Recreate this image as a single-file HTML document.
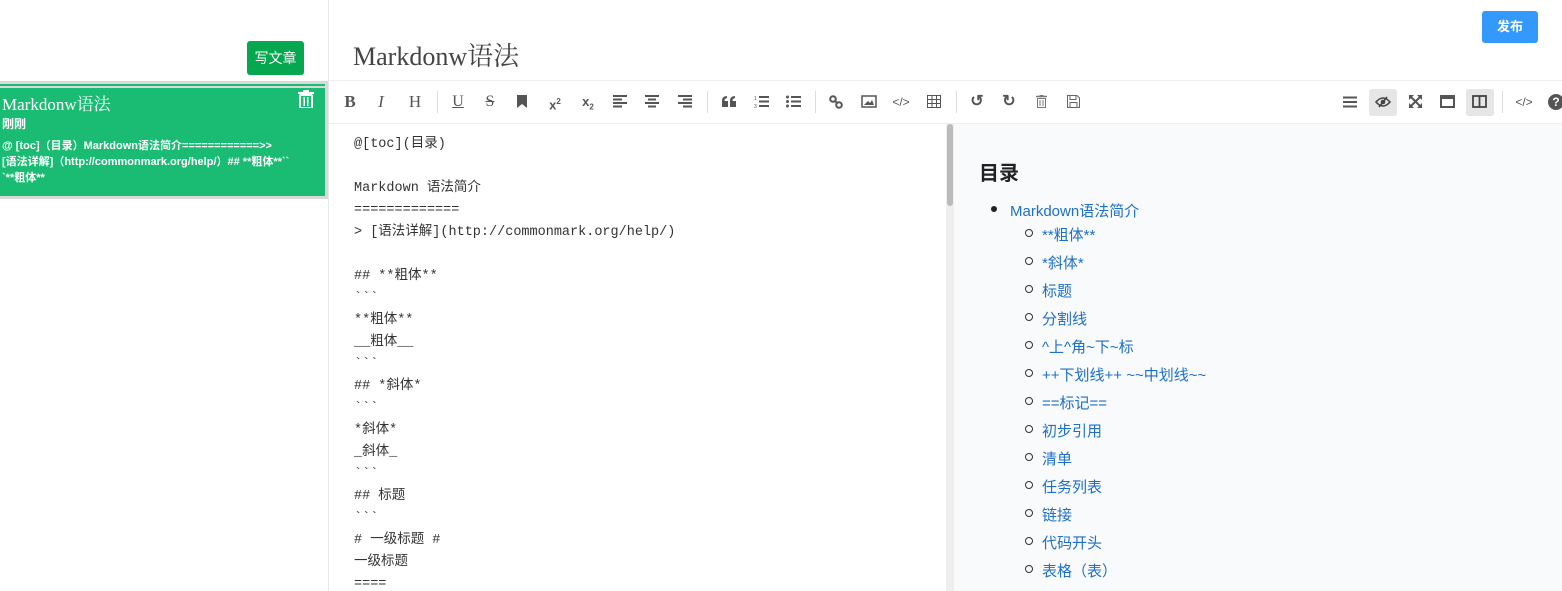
<!DOCTYPE html>
<html><head><meta charset="utf-8"><style>
*{margin:0;padding:0;box-sizing:border-box}
html{overflow:hidden;height:591px}
body{width:1562px;height:591px;overflow:hidden;background:#fff;font-family:"Liberation Sans","Noto Sans CJK SC",sans-serif;position:relative}
.a{position:absolute}
.ic{position:absolute;top:92px;width:20px;height:20px;text-align:center;line-height:20px;color:#555;font-size:15px}
.ed div{height:22px;line-height:22px;white-space:pre}
.toc div{position:absolute;color:#1d6fc7;font-size:15px}
.toc .c{width:8px;height:8px;border:1.5px solid #333;border-radius:50%;position:absolute}
</style></head><body>
<div class="a" style="left:328px;top:0;width:1px;height:591px;background:#e8e8e8"></div>
<div class="a" style="left:247px;top:41px;width:57px;height:34px;background:#05a84e;border-radius:3px;color:#fff;font-size:14px;line-height:34px;text-align:center">写文章</div>
<div class="a" style="left:0;top:81px;width:328px;height:118px;background:#d9d9d9"></div>
<div class="a" style="left:0;top:84px;width:325px;height:2px;background:#1abc74"></div>
<div class="a" style="left:0;top:88px;width:325px;height:108px;background:#1abc74;color:#fff">
<div class="a" style="left:2px;top:2px;font-family:'Liberation Serif','Noto Serif CJK SC',serif;font-size:17px">Markdonw语法</div>
<svg class="a" style="left:298px;top:2px" width="16" height="18" viewBox="0 0 16 18"><rect x="0" y="2" width="16" height="2" fill="#fff"/><rect x="5" y="0" width="6" height="2" fill="#fff"/><rect x="2" y="5" width="12" height="13" rx="1" fill="none" stroke="#fff" stroke-width="2"/><rect x="5.5" y="7" width="1.5" height="9" fill="#fff"/><rect x="9" y="7" width="1.5" height="9" fill="#fff"/></svg>
<div class="a" style="left:2px;top:27px;font-size:12px;font-weight:bold">刚刚</div>
<div class="a" style="left:2px;top:50px;width:300px;font-size:11px;font-weight:bold;line-height:16px">@ [toc]（目录）Markdown语法简介============&gt;&gt;<br>[语法详解]（http://commonmark.org/help/）## **粗体**&#96;&#96;<br>&#96;**粗体**</div>
</div>
<div class="a" style="left:353px;top:36px;font-family:'Liberation Serif','Noto Serif CJK SC',serif;font-size:26px;color:#444">Markdonw语法</div>
<div class="a" style="left:1482px;top:11px;width:56px;height:32px;background:#3399ff;border-radius:3px;color:#fff;font-size:13px;font-weight:bold;line-height:32px;text-align:center">发布</div>
<div class="a" style="left:329px;top:80px;width:1233px;height:1px;background:#eee"></div>
<div class="a" style="left:329px;top:123px;width:1233px;height:1px;background:#eee"></div>
<div class="ic" style="left:340px;font-family:'Liberation Serif',serif;font-weight:bold;font-size:17px">B</div>
<div class="ic" style="left:371px;font-family:'Liberation Serif',serif;font-style:italic;font-size:17px">I</div>
<div class="ic" style="left:405px;font-family:'Liberation Serif',serif;font-size:17px">H</div>
<div class="a" style="left:437px;top:91px;width:1px;height:22px;background:#ddd"></div>
<div class="ic" style="left:448px;text-decoration:underline;font-family:'Liberation Serif',serif;font-size:16px">U</div>
<div class="ic" style="left:480px;text-decoration:line-through;font-family:'Liberation Serif',serif;font-size:16px">S</div>
<svg class="a" style="left:517px;top:95px" width="10" height="13"><path d="M0 0H10V13L5 9L0 13Z" fill="#555"/></svg>
<div class="ic" style="left:545px;font-weight:bold;font-size:13px">x<sup style="font-size:8px">2</sup></div>
<div class="ic" style="left:578px;font-weight:bold;font-size:13px">x<sub style="font-size:8px">2</sub></div>
<svg class="a" style="left:613px;top:95px" width="14" height="13"><path d="M0 1H14M0 4.5H9M0 8H14M0 11.5H9" stroke="#555" stroke-width="2"/></svg>
<svg class="a" style="left:645px;top:95px" width="14" height="13"><path d="M0 1H14M3 4.5H11M0 8H14M3 11.5H11" stroke="#555" stroke-width="2"/></svg>
<svg class="a" style="left:678px;top:95px" width="14" height="13"><path d="M0 1H14M5 4.5H14M0 8H14M5 11.5H14" stroke="#555" stroke-width="2"/></svg>
<div class="a" style="left:707px;top:91px;width:1px;height:22px;background:#ddd"></div>
<svg class="a" style="left:722px;top:96px" width="14" height="11"><path d="M0 5Q0 0 5 0V2Q2.5 2.5 2.5 5H6V11H0ZM8 5Q8 0 13 0V2Q10.5 2.5 10.5 5H14V11H8Z" fill="#555"/></svg>
<svg class="a" style="left:754px;top:95px" width="15" height="13"><path d="M5 2H15M5 6.5H15M5 11H15" stroke="#555" stroke-width="2"/><text x="0" y="5" font-size="5" fill="#555">1</text><text x="0" y="13" font-size="5" fill="#555">3</text></svg>
<svg class="a" style="left:786px;top:95px" width="15" height="13"><path d="M5 2H15M5 6.5H15M5 11H15" stroke="#555" stroke-width="2"/><circle cx="1.5" cy="2" r="1.5" fill="#555"/><circle cx="1.5" cy="6.5" r="1.5" fill="#555"/><circle cx="1.5" cy="11" r="1.5" fill="#555"/></svg>
<div class="a" style="left:815px;top:91px;width:1px;height:22px;background:#ddd"></div>
<svg class="a" style="left:829px;top:95px" width="14" height="14"><circle cx="4" cy="4" r="2.8" fill="none" stroke="#555" stroke-width="2"/><circle cx="10" cy="10" r="2.8" fill="none" stroke="#555" stroke-width="2"/><path d="M6 6L8 8" stroke="#555" stroke-width="2"/></svg>
<svg class="a" style="left:861px;top:95px" width="16" height="13"><rect x="1" y="1" width="14" height="11" fill="none" stroke="#555" stroke-width="1.5"/><path d="M3 10L7 6L9 8L11 5L13 10Z" fill="#555"/></svg>
<div class="ic" style="left:891px;font-size:12px">&lt;/&gt;</div>
<svg class="a" style="left:927px;top:95px" width="14" height="13"><rect x="0.5" y="0.5" width="13" height="12" fill="none" stroke="#555"/><path d="M0 4.5H14M0 8.5H14M5 0V13M9.5 0V13" stroke="#555"/></svg>
<div class="a" style="left:956px;top:91px;width:1px;height:22px;background:#ddd"></div>
<div class="ic" style="left:967px;font-weight:bold;font-size:16px">↺</div>
<div class="ic" style="left:999px;font-weight:bold;font-size:16px">↻</div>
<svg class="a" style="left:1036px;top:95px" width="11" height="13"><path d="M0 1.5H11M3.5 0H7.5" stroke="#777" stroke-width="1.5"/><rect x="1.5" y="3.5" width="8" height="9" fill="none" stroke="#777"/><path d="M4 5V11M7 5V11" stroke="#777"/></svg>
<svg class="a" style="left:1067px;top:95px" width="13" height="13"><path d="M0.5 0.5H10L12.5 3V12.5H0.5Z" fill="none" stroke="#666"/><rect x="3" y="0.5" width="6" height="4" fill="none" stroke="#666"/><rect x="3" y="7.5" width="7" height="5" fill="none" stroke="#666"/></svg>
<svg class="a" style="left:1343px;top:96px" width="14" height="12"><path d="M0 1.5H14M0 6H14M0 10.5H14" stroke="#555" stroke-width="2"/></svg>
<div class="a" style="left:1369px;top:89px;width:28px;height:27px;background:#e6e6e6;border-radius:3px"></div>
<svg class="a" style="left:1375px;top:96px" width="16" height="12"><path d="M1 6Q8 -2 15 6Q8 14 1 6Z" fill="none" stroke="#444" stroke-width="1.6"/><circle cx="8" cy="6" r="2.3" fill="#444"/><path d="M4 11L12 1" stroke="#444" stroke-width="1.6"/></svg>
<svg class="a" style="left:1409px;top:95px" width="13" height="13"><path d="M1 1L12 12M12 1L1 12" stroke="#555" stroke-width="2"/><path d="M0 0H5L0 5ZM13 0H8L13 5ZM0 13H5L0 8ZM13 13H8L13 8Z" fill="#555"/></svg>
<svg class="a" style="left:1440px;top:95px" width="15" height="13"><rect x="1" y="1" width="13" height="11" fill="none" stroke="#555" stroke-width="2"/><rect x="1" y="1" width="13" height="3" fill="#555"/></svg>
<div class="a" style="left:1466px;top:89px;width:28px;height:27px;background:#e6e6e6;border-radius:3px"></div>
<svg class="a" style="left:1472px;top:95px" width="15" height="13"><rect x="1" y="1" width="13" height="11" fill="none" stroke="#444" stroke-width="1.8"/><path d="M7.5 1V12" stroke="#444" stroke-width="1.8"/></svg>
<div class="a" style="left:1502px;top:91px;width:1px;height:22px;background:#ddd"></div>
<div class="ic" style="left:1514px;font-size:12px">&lt;/&gt;</div>
<div class="a" style="left:1548px;top:94px;width:16px;height:16px;border-radius:50%;background:#555;color:#fff;font-size:12px;font-weight:bold;line-height:16px;text-align:center">?</div>
<div class="a ed" style="left:354px;top:134px;font-family:'Liberation Mono','Noto Sans CJK SC',monospace;font-size:13.5px;color:#333">
<div>@[toc](目录)</div><div> </div><div>Markdown 语法简介</div><div>=============</div><div>&gt; [语法详解](http://commonmark.org/help/)</div><div> </div><div>## **粗体**</div><div>&#96;&#96;&#96;</div><div>**粗体**</div><div>__粗体__</div><div>&#96;&#96;&#96;</div><div>## *斜体*</div><div>&#96;&#96;&#96;</div><div>*斜体*</div><div>_斜体_</div><div>&#96;&#96;&#96;</div><div>## 标题</div><div>&#96;&#96;&#96;</div><div># 一级标题 #</div><div>一级标题</div><div>====</div>
</div>
<div class="a" style="left:946px;top:124px;width:8px;height:467px;background:#eee"></div>
<div class="a" style="left:947px;top:124px;width:6px;height:82px;background:#bbb;border-radius:3px"></div>
<div class="a" style="left:954px;top:124px;width:608px;height:467px;background:#f9fafb;overflow:hidden">
<div class="a" style="left:25px;top:33px;font-size:20px;font-weight:bold;color:#222">目录</div>
<div class="toc">
<div style="left:37px;top:82px;width:6px;height:6px;background:#222;border-radius:50%"></div>
<div style="left:56px;top:76px">Markdown语法简介</div>
<span class="c" style="left:71px;top:105px"></span><div style="left:88px;top:100px">**粗体**</div>
<span class="c" style="left:71px;top:133px"></span><div style="left:88px;top:128px">*斜体*</div>
<span class="c" style="left:71px;top:161px"></span><div style="left:88px;top:156px">标题</div>
<span class="c" style="left:71px;top:189px"></span><div style="left:88px;top:184px">分割线</div>
<span class="c" style="left:71px;top:217px"></span><div style="left:88px;top:212px">^上^角~下~标</div>
<span class="c" style="left:71px;top:245px"></span><div style="left:88px;top:240px">++下划线++ ~~中划线~~</div>
<span class="c" style="left:71px;top:273px"></span><div style="left:88px;top:268px">==标记==</div>
<span class="c" style="left:71px;top:301px"></span><div style="left:88px;top:296px">初步引用</div>
<span class="c" style="left:71px;top:329px"></span><div style="left:88px;top:324px">清单</div>
<span class="c" style="left:71px;top:357px"></span><div style="left:88px;top:352px">任务列表</div>
<span class="c" style="left:71px;top:385px"></span><div style="left:88px;top:380px">链接</div>
<span class="c" style="left:71px;top:413px"></span><div style="left:88px;top:408px">代码开头</div>
<span class="c" style="left:71px;top:441px"></span><div style="left:88px;top:436px">表格（表）</div>
<div style="left:88px;top:464px">脚注</div>
</div>
</div>
</body></html>
